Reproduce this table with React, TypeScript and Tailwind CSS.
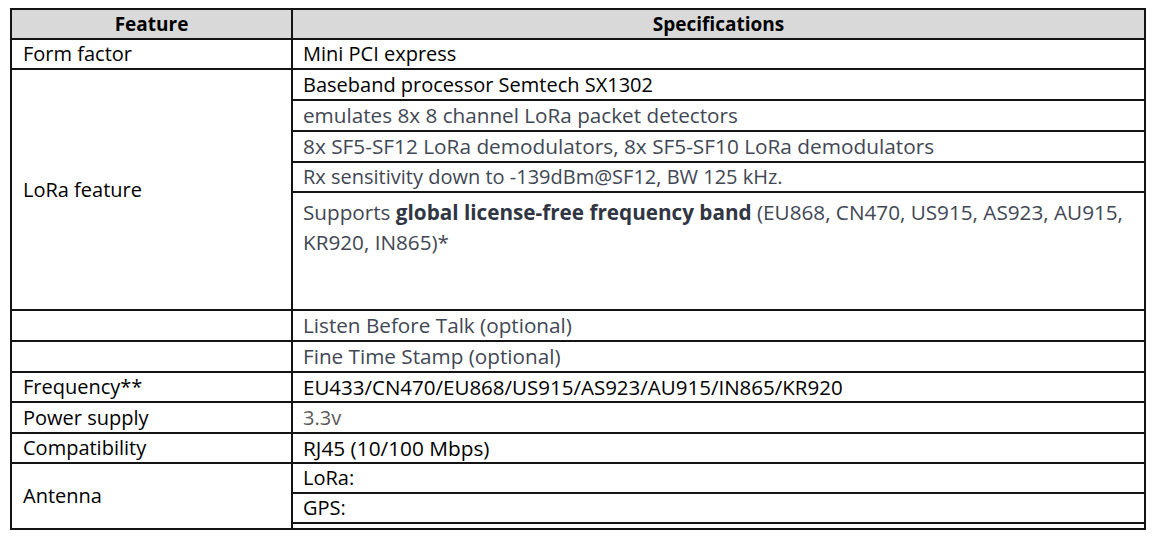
import React from "react";

const font = "font-['Open_Sans','Noto_Sans',sans-serif]";

function L({ children, className = "" }: { children?: React.ReactNode; className?: string }) {
  return (
    <div className={`bg-white flex items-center pl-[11px] text-black text-[20px] ${className}`}>{children}</div>
  );
}

function R({ children, className = "", gray = false }: { children?: React.ReactNode; className?: string; gray?: boolean }) {
  return (
    <div
      className={`bg-white flex items-center pl-[10px] ${gray ? "text-[#414754] text-[20.7px]" : "text-black text-[20px]"} ${className}`}
    >
      {children}
    </div>
  );
}

export default function App() {
  return (
    <div className={`w-[1154px] h-[541px] bg-white pt-[8px] pl-[10px] ${font} text-[19px] leading-none`}>
      <div className="grid w-[1136px] bg-[#141414] p-[2px] gap-[2px] grid-cols-[279px_851px] grid-rows-[28px_28px_29px_29px_29px_28px_116px_29px_29px_28px_29px_28px_28px_28px_4px]">
        <div className="bg-[#d9d9d9] flex items-center justify-center font-bold text-black">Feature</div>
        <div className="bg-[#d9d9d9] flex items-center justify-center font-bold text-black">Specifications</div>

        <L>Form factor</L>
        <R>Mini PCI express</R>

        <L className="row-span-5">LoRa feature</L>
        <R>Baseband processor Semtech SX1302</R>
        <R gray>emulates 8x 8 channel LoRa packet detectors</R>
        <R gray className="!text-[20.8px]">8x SF5-SF12 LoRa demodulators, 8x SF5-SF10 LoRa demodulators</R>
        <R gray className="!text-[20px]">Rx sensitivity down to -139dBm@SF12, BW 125 kHz.</R>
        <div className="bg-white pl-[10px] pt-[4px] text-[#414754] text-[20.7px] leading-[30px] whitespace-nowrap">
          Supports <span className="font-bold text-[#2f3542]">global license-free frequency band</span> (EU868, CN470, US915, AS923, AU915,
          <br />
          KR920, IN865)*
        </div>

        <L />
        <R gray>Listen Before Talk (optional)</R>
        <L />
        <R gray>Fine Time Stamp (optional)</R>

        <L>Frequency**</L>
        <R className="!text-[20.5px]">EU433/CN470/EU868/US915/AS923/AU915/IN865/KR920</R>

        <L>Power supply</L>
        <R className="!text-[#5a5a5a]">3.3v</R>

        <L>Compatibility</L>
        <R className="!text-[20.8px]">RJ45 (10/100 Mbps)</R>

        <L className="row-span-3">Antenna</L>
        <R>LoRa:</R>
        <R>GPS:</R>
        <div className="bg-white" />
      </div>
    </div>
  );
}
